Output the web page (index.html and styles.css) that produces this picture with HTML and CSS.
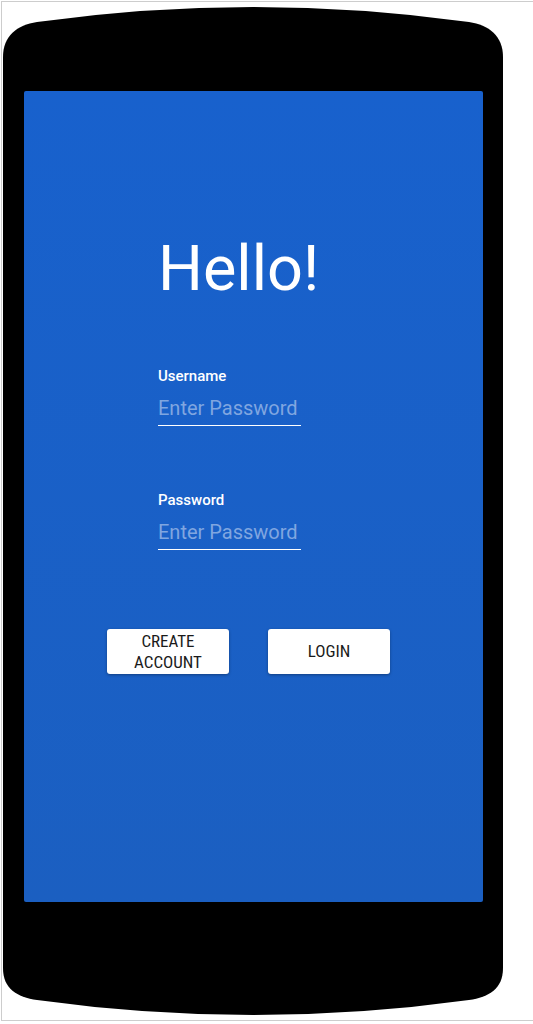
FILE: index.html
```html
<!DOCTYPE html>
<html lang="en">
<head>
<meta charset="utf-8">
<title>Login</title>
<link rel="stylesheet" href="styles.css">
</head>
<body>
  <div class="frame">
    <div class="phone">
      <div class="screen">
        <h1 class="title">Hello!</h1>
        <div class="form">
          <div class="field">
            <label class="label">Username</label>
            <div class="input">Enter Password</div>
          </div>
          <div class="field">
            <label class="label">Password</label>
            <div class="input">Enter Password</div>
          </div>
        </div>
        <div class="actions">
          <button class="btn">CREATE<br>ACCOUNT</button>
          <button class="btn">LOGIN</button>
        </div>
      </div>
    </div>
  </div>
</body>
</html>
```
FILE: styles.css
```css
html, body {
  margin: 0;
  padding: 0;
  overflow: hidden;
  background: #fff;
}

body {
  font-family: Roboto, "Noto Sans", sans-serif;
}

.frame {
  margin: 1px 0 0 1px;
  width: 540px;
  height: 1018px;
  border: 1px solid #cdcdcd;
  border-right: none;
  box-sizing: content-box;
}

.phone {
  margin: 5px 0 0 1px;
  width: 500px;
  height: 1008px;
  box-sizing: border-box;
  padding: 84px 20px 0 21px;
  background: #000;
  clip-path: path("M0,50 C0,29 14,18 34,15 Q250,-15 466,15 C486,18 500,29 500,50 L500,961 C500,982 486,990 466,993 Q250,1023 34,993 C14,990 0,982 0,961 Z");
}

.screen {
  width: 459px;
  height: 811px;
  box-sizing: border-box;
  padding-top: 140px;
  border-radius: 2px;
  background: linear-gradient(180deg, #1861cd 0%, #1b5fc1 100%);
}

.title {
  margin: 0 0 0 134px;
  font-family: Roboto, sans-serif;
  font-weight: 400;
  font-size: 63px;
  line-height: 75px;
  color: #fff;
}

.form {
  margin: 61px 0 0 134px;
  width: 143px;
}

.field + .field {
  margin-top: 65px;
}

.label {
  display: block;
  font-family: Roboto, sans-serif;
  font-weight: 500;
  font-size: 15px;
  line-height: 18px;
  color: #fff;
}

.input {
  margin-top: 11px;
  padding-bottom: 5px;
  border-bottom: 1px solid #fff;
  font-family: Roboto, sans-serif;
  font-size: 20px;
  line-height: 24px;
  color: #80a6e0;
  white-space: nowrap;
}

.actions {
  display: flex;
  gap: 39px;
  margin: 79px 0 0 83px;
}

.btn {
  width: 122px;
  height: 45px;
  padding: 0;
  border: none;
  border-radius: 3px;
  background: #fff;
  box-shadow: 0 1px 3px rgba(0, 0, 0, 0.35);
  font-family: "Roboto Condensed", "Liberation Sans Narrow", Roboto, sans-serif;
  font-stretch: condensed;
  font-size: 17px;
  line-height: 21px;
  color: #1a1a1a;
  text-align: center;
}
```
